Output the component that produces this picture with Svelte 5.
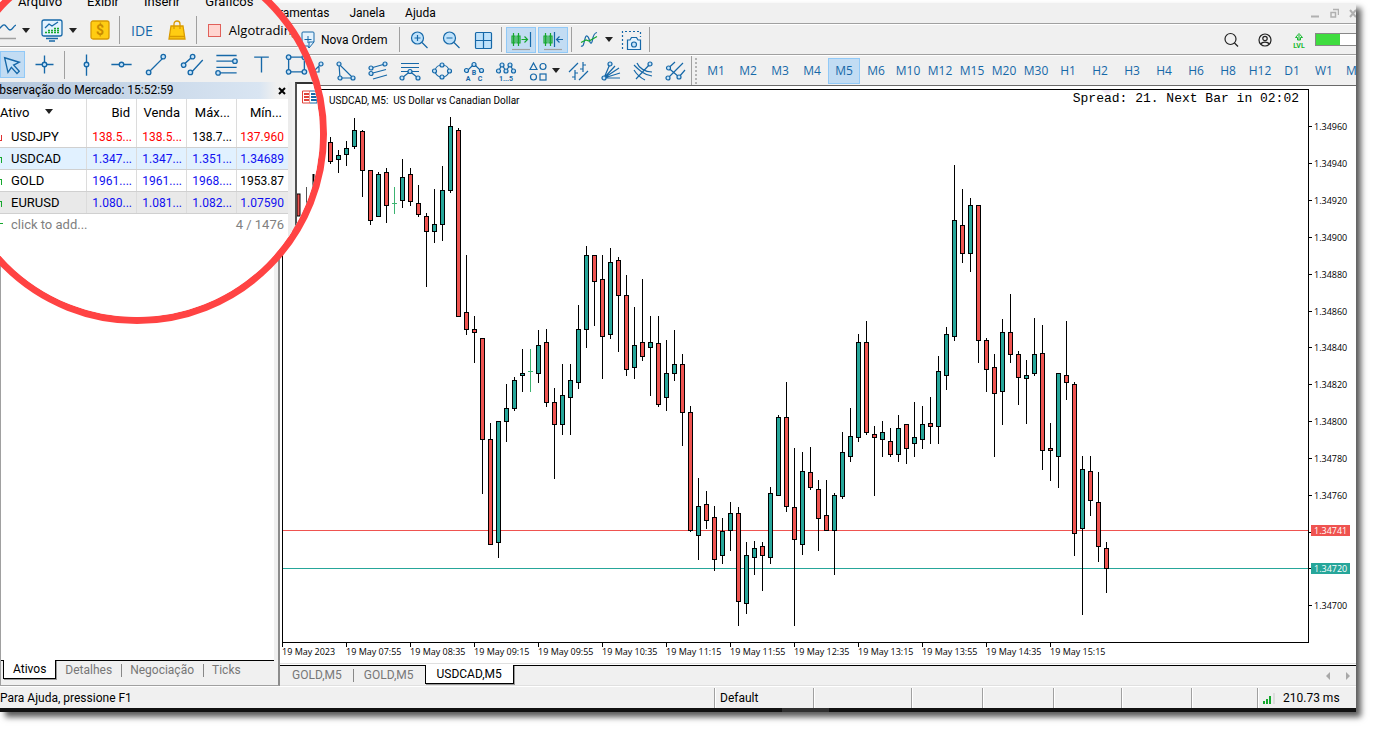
<script lang="ts">
  type Candle = [number, number, number, number, 'up' | 'down']
  type Dot = [number, number]

  interface Tool {
    name: string
    d?: string
    dots?: Dot[]
    label?: string
  }

  const menus = ['Ferramentas', 'Janela', 'Ajuda']
  const lensMenus = ['Arquivo', 'Exibir', 'Inserir', 'Gráficos']

  const timeframes = [
    'M1', 'M2', 'M3', 'M4', 'M5', 'M6', 'M10', 'M12', 'M15', 'M20', 'M30',
    'H1', 'H2', 'H3', 'H4', 'H6', 'H8', 'H12', 'D1', 'W1', 'MN',
  ]
  let timeframe = $state('M5')

  const tools: Tool[] = [
    { name: 'Angle', d: 'M4 20L19 5M17 8v5h-5', dots: [[19, 5]] },
    { name: 'Triangle', d: 'M5 5L6 19L19 19Z', dots: [[5, 5], [6, 19], [19, 19]] },
    {
      name: 'Channel',
      d: 'M5 9L19 5M5 14.500L20 10.500M7 20L21 16',
      dots: [[5, 9], [19, 5], [5, 14.5]],
    },
    {
      name: 'Expansion',
      d: 'M3 4.500H21M3 8.500H21M3 12.500H21M4 19L12 12.500L20 19',
      dots: [[4, 19], [12, 12.5], [20, 19]],
    },
    {
      name: 'Ellipse',
      d: 'M5 12C6 4 18 4 19 12C18 20 6 20 5 12Z',
      dots: [[4.5, 12], [12, 6], [19.5, 12], [12, 18]],
    },
    {
      name: 'Correction wave',
      d: 'M5 12L12 5L19 12',
      dots: [[4.5, 11.5], [12, 5.5], [19.5, 11.5]],
      label: 'ABC',
    },
    {
      name: 'Impulse wave',
      d: 'M4.500 12L8 6L12 12L16 6L19.500 12',
      dots: [[4.5, 12], [8, 6], [12, 12], [16, 6], [19.5, 12]],
      label: '1...5',
    },
  ]

  const lineTools: Tool[] = [
    {
      name: 'Cycle lines',
      d: 'M2 13L11 4M12 21L21 12M8 11V21M5 18H8M8 14H11M16 3V13M16 6H19M13 10H16',
    },
    {
      name: 'Gann fan',
      d: 'M5 19L11 5M5 19L16 7M5 19L20 9M5 19L21 14M5 19L21 19',
      dots: [[5, 19], [11, 5]],
    },
    {
      name: 'Fibonacci arcs',
      d: 'M5 20L19 5M3 11C6 16 10 19 14 21M3 6C8 11 13 16 21 17M6 4C8 9 14 13 21 13',
      dots: [[19, 5]],
    },
    {
      name: 'Pitchfork',
      d: 'M5.500 9L12 3M5 19L20 4M16 18L22 11M5.500 9L16 18',
      dots: [[5.5, 9], [5, 19], [16, 18]],
    },
  ]

  const lensTools: Tool[] = [
    { name: 'Vertical line', d: 'M12 3V22', dots: [[12, 12]] },
    { name: 'Horizontal line', d: 'M3 12H21', dots: [[12, 12]] },
    { name: 'Trendline', d: 'M4 20L19 5', dots: [[5, 19], [18, 5]] },
    {
      name: 'Equidistant channel',
      d: 'M4 13L14 4M11 20L22 8',
      dots: [[5, 12.5], [13, 5], [11, 19]],
    },
    {
      name: 'Fibonacci',
      d: 'M3 4H21M3 9H18M3 14.500H21M6 19.500H21',
      dots: [[19.5, 9], [4.5, 19.5]],
    },
    { name: 'Text', d: 'M5.500 5.500H18.500M12 5.500V19' },
    {
      name: 'Rectangle',
      d: 'M5 5.500H19V18.500H5Z',
      dots: [[5, 5.5], [19, 5.5], [19, 18.5], [5, 18.5]],
    },
  ]

  const quotes = [
    { symbol: 'USDJPY', dir: 'down', bid: '138.5...', ask: '138.5...', high: '138.7...', low: '137.960', tones: ['red', 'red', 'black', 'red'] },
    { symbol: 'USDCAD', dir: 'up', bid: '1.347...', ask: '1.347...', high: '1.351...', low: '1.34689', tones: ['blue', 'blue', 'blue', 'blue'] },
    { symbol: 'GOLD', dir: 'up', bid: '1961....', ask: '1961....', high: '1968....', low: '1953.87', tones: ['blue', 'blue', 'blue', 'black'] },
    { symbol: 'EURUSD', dir: 'up', bid: '1.080...', ask: '1.081...', high: '1.082...', low: '1.07590', tones: ['blue', 'blue', 'blue', 'blue'] },
  ]

  // wick top, body top, body bottom, wick bottom
  const candles: Candle[] = [
    [137, 142, 162, 164, 'down'],
    [150, 155, 160, 173, 'up'],
    [141, 148, 155, 166, 'up'],
    [118, 130, 147, 149, 'up'],
    [130, 131, 171, 197, 'down'],
    [170, 170, 221, 225, 'down'],
    [172, 174, 217, 217, 'up'],
    [168, 172, 206, 223, 'down'],
    [187, 203, 203, 214, 'up'],
    [159, 177, 201, 208, 'up'],
    [168, 174, 202, 206, 'down'],
    [185, 203, 215, 217, 'down'],
    [213, 216, 232, 287, 'down'],
    [189, 224, 232, 243, 'up'],
    [166, 190, 225, 241, 'up'],
    [117, 126, 191, 193, 'up'],
    [128, 130, 317, 317, 'down'],
    [255, 312, 330, 335, 'down'],
    [316, 329, 333, 363, 'down'],
    [338, 338, 440, 494, 'down'],
    [423, 439, 545, 545, 'down'],
    [421, 421, 543, 558, 'up'],
    [384, 408, 422, 442, 'up'],
    [377, 380, 409, 411, 'up'],
    [349, 373, 376, 392, 'up'],
    [349, 371, 371, 392, 'up'],
    [330, 345, 374, 383, 'up'],
    [329, 342, 403, 407, 'down'],
    [388, 402, 425, 479, 'down'],
    [364, 395, 425, 435, 'up'],
    [364, 380, 398, 435, 'up'],
    [305, 329, 383, 389, 'up'],
    [246, 255, 330, 348, 'up'],
    [255, 255, 282, 326, 'down'],
    [255, 279, 337, 379, 'down'],
    [248, 262, 335, 339, 'up'],
    [257, 260, 296, 352, 'down'],
    [275, 295, 370, 376, 'down'],
    [307, 345, 368, 379, 'up'],
    [279, 342, 357, 361, 'down'],
    [316, 342, 348, 396, 'up'],
    [316, 343, 405, 407, 'down'],
    [340, 373, 398, 411, 'up'],
    [330, 364, 374, 381, 'up'],
    [354, 364, 413, 446, 'down'],
    [406, 412, 531, 532, 'down'],
    [478, 506, 536, 560, 'up'],
    [491, 504, 521, 529, 'down'],
    [506, 517, 560, 571, 'down'],
    [518, 531, 556, 564, 'up'],
    [502, 513, 531, 551, 'up'],
    [507, 513, 602, 626, 'down'],
    [542, 555, 604, 614, 'up'],
    [541, 548, 558, 575, 'up'],
    [542, 546, 556, 591, 'down'],
    [487, 493, 558, 564, 'up'],
    [415, 417, 496, 496, 'up'],
    [382, 417, 507, 512, 'down'],
    [448, 507, 540, 626, 'down'],
    [452, 471, 545, 555, 'up'],
    [447, 472, 488, 490, 'down'],
    [480, 489, 519, 551, 'down'],
    [480, 515, 531, 531, 'down'],
    [493, 495, 531, 575, 'up'],
    [432, 452, 497, 499, 'up'],
    [408, 436, 457, 462, 'up'],
    [334, 342, 438, 442, 'up'],
    [321, 342, 433, 435, 'down'],
    [426, 434, 438, 496, 'down'],
    [421, 432, 440, 457, 'up'],
    [428, 441, 455, 457, 'down'],
    [415, 428, 455, 462, 'up'],
    [424, 424, 449, 464, 'down'],
    [402, 437, 444, 457, 'up'],
    [406, 424, 440, 449, 'up'],
    [397, 423, 427, 444, 'down'],
    [356, 371, 427, 444, 'up'],
    [327, 334, 376, 390, 'up'],
    [165, 220, 337, 341, 'up'],
    [189, 225, 254, 263, 'down'],
    [198, 205, 254, 272, 'up'],
    [205, 205, 341, 363, 'down'],
    [338, 340, 370, 392, 'down'],
    [354, 367, 394, 457, 'down'],
    [319, 332, 392, 425, 'up'],
    [294, 332, 355, 363, 'down'],
    [351, 354, 378, 405, 'down'],
    [360, 375, 379, 424, 'up'],
    [318, 354, 374, 376, 'up'],
    [325, 353, 451, 470, 'down'],
    [423, 448, 451, 481, 'down'],
    [373, 373, 457, 488, 'up'],
    [321, 375, 383, 400, 'down'],
    [382, 384, 534, 556, 'down'],
    [456, 469, 529, 615, 'up'],
    [456, 471, 501, 516, 'down'],
    [472, 502, 547, 562, 'down'],
    [542, 548, 569, 593, 'down'],
  ]

  // candle rows are stored in window space, the plot starts below the toolbars
  const PLOT_TOP = 90
  const FIRST_X = 47
  const STEP = 8

  const TOP_PRICE = 134960
  const TOP_PRICE_Y = 36

  // 240 points take 442 px
  function priceY(points: number): number {
    return Math.ceil(TOP_PRICE_Y + ((TOP_PRICE - points) * 442) / 240)
  }

  const prices = Array.from({ length: 14 }, (_, i) => TOP_PRICE - i * 20)
  const ask = 134741
  const bid = 134720

  const times = [
    '19 May 2023', '19 May 07:55', '19 May 08:35', '19 May 09:15',
    '19 May 09:55', '19 May 10:35', '19 May 11:15', '19 May 11:55',
    '19 May 12:35', '19 May 13:15', '19 May 13:55', '19 May 14:35',
    '19 May 15:15',
  ]

  const watchTabs = ['Ativos', 'Detalhes', 'Negociação', 'Ticks']
  const chartTabs = ['GOLD,M5', 'GOLD,M5', 'USDCAD,M5']
  let watchTab = $state(0)
  let chartTab = $state(2)
</script>

{#snippet toolIcon(tool: Tool)}
  <svg class="icon" viewBox="0 0 24 24" aria-hidden="true">
    {#if tool.d}<path d={tool.d} />{/if}
    {#each tool.dots ?? [] as [x, y]}
      <circle cx={x} cy={y} r="2" />
    {/each}
    {#if tool.label === 'ABC'}
      <text x="12" y="16">B</text>
      <text x="6" y="22">A</text>
      <text x="18" y="22">C</text>
    {:else if tool.label}
      <text x="12" y="22">{tool.label}</text>
    {/if}
  </svg>
{/snippet}

{#snippet caret()}
  <svg class="caret" viewBox="0 0 8 5" aria-hidden="true"><path d="M0 0H8L4 5Z" /></svg>
{/snippet}

<div class="window">
  <header class="menubar">
    <nav class="menus">
      {#each menus as item}
        <button type="button">{item}</button>
      {/each}
    </nav>
    <div class="window-buttons">
      <button type="button" aria-label="Minimize">
        <svg viewBox="0 0 10 10"><path d="M1 8.500H9" stroke-width="2" /></svg>
      </button>
      <button type="button" aria-label="Restore">
        <svg viewBox="0 0 10 10"><path d="M2 4.500H6.500V9H2ZM4 1.500H9.500V7" stroke-width="1.500" /></svg>
      </button>
      <button type="button" aria-label="Close">
        <svg viewBox="0 0 10 10"><path d="M2 2L8 9M8 2L2 9" stroke-width="2" /></svg>
      </button>
    </div>
  </header>

  <div class="toolbar">
    <button type="button" class="order">
      <svg viewBox="0 0 14 18" aria-hidden="true">
        <path class="page" d="M2 1H12Q13 1 13 2V11L8 17L7 15H2Q1 15 1 14V2Q1 1 2 1Z" />
        <path d="M7 5V12M3.500 8.500H10.500M13 11H8V17" />
      </svg>
      Nova Ordem
    </button>
    <i class="sep"></i>
    <button type="button" class="tool" aria-label="Zoom in">
      <svg class="icon" viewBox="0 0 24 24">
        <circle class="big" cx="10.500" cy="10" r="6" /><path d="M15 14.500L20.500 20M10.500 7V13M7.500 10H13.500" />
      </svg>
    </button>
    <button type="button" class="tool" aria-label="Zoom out">
      <svg class="icon" viewBox="0 0 24 24">
        <circle class="big" cx="10.500" cy="10" r="6" /><path d="M15 14.500L20.500 20M7.500 10H13.500" />
      </svg>
    </button>
    <button type="button" class="tool" aria-label="Tile windows">
      <svg class="icon" viewBox="0 0 24 24">
        <rect class="big" x="4.500" y="4.500" width="16" height="16" rx="1" /><path d="M12.500 4.500V20.500M4.500 12.500H20.500" />
      </svg>
    </button>
    <i class="sep"></i>
    <button type="button" class="toggle" aria-pressed="true" aria-label="Auto scroll">
      <svg class="icon" viewBox="0 0 24 24">
        <path class="green" d="M4.500 5V18M3 8H6V15H3ZM9.500 5V18M8 8H11V15H8ZM12.500 11.500H18.500M15.500 8.500L18.500 11.500L15.500 14.500" />
        <path d="M21.500 4V19" /><path class="gray" d="M3 21.500H21" />
      </svg>
    </button>
    <button type="button" class="toggle" aria-pressed="true" aria-label="Chart shift">
      <svg class="icon" viewBox="0 0 24 24">
        <path class="green" d="M4.500 5V18M3 8H6V15H3ZM9.500 5V18M8 8H11V15H8Z" />
        <path d="M13.500 4V19M16 11.500H22M18.500 8.500L15.500 11.500L18.500 14.500" /><path class="gray" d="M3 21.500H21" />
      </svg>
    </button>
    <i class="sep close"></i>
    <button type="button" class="tool indicators" aria-label="Indicators">
      <svg class="icon" viewBox="0 0 24 24">
        <path d="M4 18C8 20 7 7 10 8C13 9 12 16 14.500 15C16 14 15 5 20 4.500" />
        <path class="green" d="M4 14.500L9 12L12 13L20 8.500" />
      </svg>
      {@render caret()}
    </button>
    <button type="button" class="tool" aria-label="Screenshot">
      <svg class="icon" viewBox="0 0 24 24">
        <path stroke-dasharray="2 2" d="M3.500 21V3.500H21.500V9" />
        <path class="page" d="M8.500 12H11L12.500 9.500H17.500L19 12H21.500V21.500H8.500Z" />
        <circle cx="15" cy="16.500" r="2.500" />
      </svg>
    </button>
    <i class="sep"></i>
    <div class="account">
      <button type="button" aria-label="Search">
        <svg class="dark" viewBox="0 0 16 16"><circle cx="7.500" cy="7" r="5.500" /><path d="M11.500 11L15 14.500" /></svg>
      </button>
      <button type="button" aria-label="Profile">
        <svg class="dark" viewBox="0 0 16 16">
          <circle cx="8" cy="8" r="6" /><circle cx="8" cy="6.500" r="2.200" /><path d="M4 12C5 9.500 11 9.500 12 12" />
        </svg>
      </button>
      <button type="button" class="level" aria-label="Level">
        <svg viewBox="0 0 16 18">
          <path d="M6.500 9V6.500H4.500L8 2.500L11.500 6.500H9.500V9ZM8 4V9" /><text x="8" y="17">LVL</text>
        </svg>
      </button>
      <div class="meter"><span style="width: 60%"></span></div>
    </div>
  </div>

  <div class="toolbar drawing">
    {#each tools as tool}
      <button type="button" class="tool" aria-label={tool.name}>{@render toolIcon(tool)}</button>
    {/each}
    <button type="button" class="tool shapes" aria-label="Shapes">
      <svg class="icon" viewBox="0 0 24 24">
        <path d="M7.500 4L11 10.500H4Z" /><circle class="shape" cx="17" cy="7.500" r="3" />
        <circle class="shape" cx="7.500" cy="18" r="3" /><rect class="shape" x="14" y="15" width="6" height="6" />
      </svg>
      {@render caret()}
    </button>
    {#each lineTools as tool}
      <button type="button" class="tool" aria-label={tool.name}>{@render toolIcon(tool)}</button>
    {/each}
    <i class="edge"></i>
    <i class="grip"></i>
    {#each timeframes as tf}
      <button
        type="button"
        class="timeframe"
        class:selected={tf === timeframe}
        onclick={() => (timeframe = tf)}>{tf}</button>
    {/each}
  </div>

  <div class="workspace">
    <aside class="watch">
      <div class="watch-body"></div>
      <div class="watch-tabs">
        {#each watchTabs as tab, i}
          <button
            type="button"
            class:current={i === watchTab}
            onclick={() => (watchTab = i)}>{tab}</button>
        {/each}
      </div>
    </aside>

    <main class="charts">
      <div class="chart">
        <svg class="plot" role="img" aria-label="USDCAD M5 candles">
          <polygon points="818,0 830,0 824,5" fill="#f3eaf5" />
          <rect class="down" x="0" y={priceY(ask)} width="100%" height="1" />
          <rect class="up" x="0" y={priceY(bid)} width="100%" height="1" />
          {#each candles as [high, top, bottom, low, dir], i}
            {@const x = FIRST_X + i * STEP}
            {#if top === bottom}
              <rect class="doji" {x} y={high - PLOT_TOP} width="1" height={low - high} />
              <rect class="doji" x={x - 2} y={top - PLOT_TOP} width="5" height="1" />
            {:else}
              <rect {x} y={high - PLOT_TOP} width="1" height={low - high} />
              <rect x={x - 2} y={top - PLOT_TOP} width="5" height={bottom - top} />
              <rect
                class={dir}
                x={x - 1}
                y={top - PLOT_TOP + 1}
                width="3"
                height={Math.max(bottom - top - 2, 1)}
              />
            {/if}
          {/each}
          <text class="title" x="46" y="14" xml:space="preserve">USDCAD, M5:  US Dollar vs Canadian Dollar</text>
        </svg>
        <p class="spread">Spread: 21. Next Bar in 02:02</p>
        <svg class="prices">
          {#each prices as price}
            <rect x="0" y={priceY(price) + 1} width="3" height="1" />
            {#if price !== bid && price !== 134740}
              <text x="5" y={priceY(price) + 5}>{(price / 100000).toFixed(5)}</text>
            {/if}
          {/each}
          <rect class="down" x="2" y={priceY(ask) - 4} width="39" height="11" />
          <text class="tag" x="5" y={priceY(ask) + 5}>{(ask / 100000).toFixed(5)}</text>
          <rect class="up" x="2" y={priceY(bid) - 4} width="39" height="11" />
          <text class="tag" x="5" y={priceY(bid) + 5}>{(bid / 100000).toFixed(5)}</text>
        </svg>
        <svg class="times">
          {#each times as time, i}
            <rect x={i * 64} y="0" width="1" height="4" />
            <text x={i * 64} y="12">{time}</text>
          {/each}
        </svg>
      </div>
      <div class="chart-tabs">
        {#each chartTabs as tab, i}
          <button
            type="button"
            class:current={i === chartTab}
            onclick={() => (chartTab = i)}>{tab}</button>
        {/each}
        <div class="scroll">
          <button type="button" aria-label="Scroll left"><svg viewBox="0 0 4 8"><path d="M4 0V8L0 4Z" /></svg></button>
          <button type="button" aria-label="Scroll right"><svg viewBox="0 0 4 8"><path d="M0 0V8L4 4Z" /></svg></button>
        </div>
      </div>
    </main>
  </div>

  <footer class="status">
    <span class="help">Para Ajuda, pressione F1</span>
    <span class="profile">Default</span>
    <span></span><span></span><span></span><span></span><span></span><span></span>
    <span class="ping">
      <svg viewBox="0 0 13 11" aria-hidden="true">
        <path class="on" d="M1 8V11M4 6V11M7 3V11" /><path class="off" d="M11 0V11" />
      </svg>
      210.73 ms
    </span>
  </footer>
  <div class="taskbar"><span></span></div>
</div>

<section class="lens" aria-label="Market watch">
  <div class="lens-content">
    <nav class="lens-menus">
      {#each lensMenus as item}
        <button type="button">{item}</button>
      {/each}
    </nav>
    <div class="lens-bar">
      <button type="button" class="split" aria-label="Line chart">
        <svg class="art" viewBox="0 0 16 24">
          <path d="M-2 12L2 8C6 4 7 12 10 12C13 12 13 8 16 7" /><path class="gray" d="M0 20.500H16" />
        </svg>
        {@render caret()}
      </button>
      <button type="button" class="split" aria-label="Trading terminal">
        <svg class="art wide" viewBox="0 0 22 24">
          <path class="page" d="M3 2H19Q21 2 21 4V16Q21 18 19 18H3Q1 18 1 16V4Q1 2 3 2Z" />
          <path d="M4 10L8 6L11 8L17 4M5 20.500H17M8 23H14" />
          <path class="green" stroke-dasharray="2 1" d="M4 14.500H18M7 12.500H18M13 10.500H18" />
        </svg>
        {@render caret()}
      </button>
      <button type="button" aria-label="Deposit">
        <svg class="art gold" viewBox="0 0 20 20">
          <rect x="1" y="1" width="18" height="18" rx="2" /><text x="10" y="15">$</text>
        </svg>
      </button>
      <i class="sep"></i>
      <button type="button" class="ide">IDE</button>
      <button type="button" aria-label="Market">
        <svg class="art gold" viewBox="0 0 18 20">
          <path d="M3 6H15L17 19H1Z" /><path class="open" d="M6 9V4C6 0 12 0 12 4V9M2 16.500H16" />
        </svg>
      </button>
      <i class="sep"></i>
      <button type="button" class="algo"><i class="stop"></i>Algotrading</button>
    </div>
    <div class="lens-bar lens-tools">
      <button type="button" class="pointer" aria-label="Cursor">
        <svg class="icon" viewBox="0 0 24 24"><path class="fill" d="M5 6L18 10L13 12.500L18 18L16 20L11 14.500L8 19Z" /></svg>
      </button>
      <button type="button" aria-label="Crosshair">
        {@render toolIcon({ name: 'Crosshair', d: 'M12 4V20M4 12H20', dots: [[12, 12]] })}
      </button>
      <i class="sep"></i>
      {#each lensTools as tool}
        <button type="button" aria-label={tool.name}>{@render toolIcon(tool)}</button>
      {/each}
    </div>
    <div class="lens-body">
      <div class="quotes">
        <div class="quotes-title">
          <h2>Observação do Mercado: 15:52:59</h2>
          <button type="button" aria-label="Close">
            <svg viewBox="0 0 8 8"><path d="M1 1L7 7M7 1L1 7" /></svg>
          </button>
        </div>
        <table>
          <thead>
            <tr>
              <th class="name">Ativo {@render caret()}</th>
              <th>Bid</th>
              <th>Venda</th>
              <th>Máx...</th>
              <th class="low">Mín...</th>
            </tr>
          </thead>
          <tbody>
            {#each quotes as q}
              <tr class={q.symbol.toLowerCase()}>
                <td class="name"><i class="arrow {q.dir}"></i>{q.symbol}</td>
                <td class={q.tones[0]}>{q.bid}</td>
                <td class={q.tones[1]}>{q.ask}</td>
                <td class={q.tones[2]}>{q.high}</td>
                <td class={q.tones[3]}>{q.low}</td>
              </tr>
            {/each}
            <tr class="add">
              <td class="name" colspan="3"><i class="arrow plus"></i>click to add...</td>
              <td colspan="2">4 / 1476</td>
            </tr>
          </tbody>
        </table>
      </div>
      <div class="lens-chart">
        <svg aria-hidden="true">
          <path d="M5.500 7H13V19H5.500Z" fill="#fff" stroke="#e0433a" />
          <path d="M13 7H20V19H13" fill="#fff" stroke="#1668a8" />
          <path d="M7 10H12M7 13H12M7 16H12" stroke="#e0433a" stroke-width="2" />
          <path d="M14 10H20M14 13H20M14 16H20" stroke="#1668a8" stroke-width="2" />
          <rect x="0" y="110" width="3" height="22" fill="#ef5350" stroke="#000" />
          <path d="M9.500 103V132" stroke="#555" />
          <path d="M16.500 90V118" stroke="#000" stroke-width="2" />
        </svg>
      </div>
    </div>
  </div>
</section>

<style>
  :global(body) {
    min-height: 100vh;
    margin: 0;
    padding-top: 3px;
    box-sizing: border-box;
    background: #fff;
    font-family: Roboto, 'Noto Sans', sans-serif;
    font-size: 12px;
    color: #000;
  }

  button {
    margin: 0;
    padding: 0;
    border: 0;
    background: none;
    font: inherit;
    color: inherit;
    white-space: nowrap;
  }

  svg {
    display: block;
    fill: none;
    flex-shrink: 0;
  }

  .window {
    margin-right: 20px;
    background: #f0f0f0;
    box-shadow: 5px 5px 6px rgba(0, 0, 0, 0.65);
  }

  .menubar {
    display: flex;
    justify-content: space-between;
    height: 20px;
    padding-left: 262px;
    overflow: hidden;
    border-bottom: 1px solid #a0a0a0;
  }

  .menus {
    display: flex;
    gap: 20px;
    line-height: 20px;
  }

  .window-buttons {
    display: flex;
    gap: 9px;
    align-items: center;
    margin-right: -2px;
  }

  .window-buttons svg {
    width: 10px;
    height: 10px;
    stroke: #b0b0b0;
  }

  .toolbar {
    display: flex;
    align-items: center;
    height: 29px;
    padding-left: 301px;
    overflow: hidden;
    border-top: 1px solid #fff;
    border-bottom: 1px solid #a0a0a0;
  }

  .drawing {
    padding-left: 298px;
    border-bottom-color: #696969;
  }

  .icon {
    width: 24px;
    height: 24px;
    stroke: #1668a8;
    stroke-width: 1.2;
  }

  .icon circle,
  .fill {
    fill: #c5e2f8;
  }

  .icon .big {
    fill: #bfe2fb;
  }

  .icon .shape {
    fill: none;
  }

  .icon text {
    fill: #1668a8;
    stroke: none;
    font-size: 7px;
    font-weight: 700;
    text-anchor: middle;
  }

  .icon .green,
  .art .green {
    stroke: #16a82e;
  }

  .icon .gray,
  .art .gray {
    stroke: #a0a0a0;
  }

  .page {
    fill: #e3f2fd;
  }

  .caret {
    width: 8px;
    height: 5px;
    fill: #222;
  }

  .tool {
    display: flex;
    align-items: center;
    justify-content: center;
    flex: none;
    width: 32px;
  }

  .tool.indicators {
    width: 40px;
    gap: 4px;
  }

  .tool.shapes {
    width: 41px;
    gap: 2px;
  }

  .order {
    display: flex;
    align-items: center;
    gap: 6px;
  }

  .order svg {
    width: 14px;
    height: 18px;
    stroke: #1668a8;
  }

  .sep {
    flex: none;
    width: 1px;
    height: 25px;
    margin: 0 3px 0 12px;
    background: #a0a0a0;
  }

  .tool + .sep {
    margin: 0 4px 0 2px;
  }

  .toggle {
    display: flex;
    align-items: center;
    justify-content: center;
    flex: none;
    width: 30px;
    height: 26px;
    margin-right: 2px;
    background: #c2dcf3;
    border: 1px solid #91c9f7;
    box-sizing: border-box;
  }

  .sep.close {
    margin: 0 3px 0 1px;
  }

  .account {
    display: flex;
    align-items: center;
    gap: 18px;
    margin-left: auto;
  }

  .account svg {
    width: 16px;
    height: 16px;
  }

  .dark {
    stroke: #222;
    stroke-width: 1.2;
  }

  .level svg {
    height: 18px;
    stroke: #16b82e;
  }

  .level text {
    fill: #16b82e;
    stroke: none;
    font-size: 7px;
    font-weight: 700;
    text-anchor: middle;
  }

  .meter {
    width: 40px;
    height: 11px;
    margin-left: -10px;
    background: #fff;
    border: 1px solid #888;
    border-right: 0;
  }

  .meter span {
    display: block;
    height: 100%;
    background: #3fdc3f;
  }

  .edge {
    flex: none;
    width: 1px;
    height: 29px;
    background: #a0a0a0;
  }

  .grip {
    flex: none;
    width: 2px;
    height: 26px;
    margin: 0 3px;
    background: repeating-linear-gradient(#b4b4b4 0 2px, transparent 2px 4px);
  }

  .timeframe {
    flex: none;
    width: 32px;
    height: 26px;
    color: #1668a8;
    font-family: 'Open Sans', 'Noto Sans', sans-serif;
    border: 1px solid transparent;
  }

  .timeframe.selected {
    background: #c2dcf3;
    border-color: #91c9f7;
  }

  .workspace {
    display: flex;
  }

  .watch {
    display: flex;
    flex-direction: column;
    flex: none;
    width: 273px;
    padding-right: 4px;
    border-left: 1px solid #a0a0a0;
    border-right: 2px solid #8c8c8c;
    border-bottom: 1px solid #a0a0a0;
  }

  .watch-body {
    flex: 1;
    background: #fff;
  }

  .watch-tabs,
  .chart-tabs {
    display: flex;
    color: #777;
    border-top: 1px solid #000;
  }

  .watch-tabs {
    height: 24px;
    padding-left: 2px;
  }

  .watch-tabs button,
  .chart-tabs > button {
    height: 19px;
    padding: 0 9px;
    line-height: 19px;
    position: relative;
  }

  .chart-tabs > button {
    padding: 0 11px;
  }

  .watch-tabs button:not(.current) + button::before,
  .chart-tabs button:not(.current) + button:not(.current)::before {
    content: '';
    position: absolute;
    left: 0;
    top: 3px;
    height: 13px;
    border-left: 1px solid #888;
  }

  button.current {
    margin-top: -1px;
    color: #000;
    background: #fff;
    border: 1px solid #000;
    border-top: 0;
    box-shadow: 1px 1px #999;
  }

  .charts {
    flex: 1;
    min-width: 0;
    background: #fff;
  }

  .chart {
    display: grid;
    grid-template-columns: 1fr 47px;
    padding: 3px 0 0 2px;
    border-bottom: 1px solid #e0e0e0;
    margin-bottom: 1px;
    position: relative;
  }

  .plot {
    width: 100%;
    height: 554px;
    border: 1px solid #000;
    box-sizing: border-box;
    fill: #000;
  }

  .prices text,
  .times text {
    font-family: 'Open Sans', 'Noto Sans', sans-serif;
    font-size: 9px;
  }

  .plot .title {
    font-size: 10px;
  }

  .plot .down,
  .prices .down {
    fill: #ef5350;
  }

  .plot .up,
  .prices .up {
    fill: #26a69a;
  }

  .plot .doji {
    fill: #3cb371;
  }

  .spread {
    position: absolute;
    top: 5px;
    right: 57px;
    margin: 0;
    font: 13px/16px 'Liberation Mono', monospace;
  }

  .prices {
    width: 100%;
    height: 554px;
    fill: #000;
  }

  .prices .tag {
    fill: #fff;
  }

  .times {
    grid-column: 1 / -1;
    width: 100%;
    height: 20px;
    fill: #000;
  }

  .chart-tabs {
    height: 19px;
    padding-left: 1px;
    background: #f0f0f0;
    border-bottom: 1px solid #e0e0e0;
  }

  .scroll {
    display: flex;
    gap: 16px;
    align-items: center;
    margin: 0 6px 0 auto;
  }

  .scroll svg {
    width: 4px;
    height: 8px;
    fill: #a8a8a8;
  }

  .status {
    display: grid;
    grid-template-columns: 714fr 99fr 98fr 71fr 71fr 68fr 70fr 66fr 99fr;
    height: 20px;
    padding: 1px 0 0;
    border-top: 1px solid #fff;
    line-height: 20px;
  }

  .status span + span {
    border-left: 1px solid #a0a0a0;
    box-shadow: inset 1px 0 #fff;
  }

  .profile {
    padding-left: 5px;
  }

  .ping {
    display: flex;
    align-items: center;
    gap: 7px;
    padding-left: 5px;
  }

  .ping svg {
    width: 13px;
    height: 11px;
    stroke-width: 2;
  }

  .ping .on {
    stroke: #16a82e;
  }

  .ping .off {
    stroke: #ddd;
  }

  .taskbar {
    height: 4px;
    background: #111;
  }

  .taskbar span {
    display: block;
    width: 47px;
    height: 4px;
    margin-left: 782px;
    background: #303030;
  }

  /* magnified corner, lies over the window */
  .lens {
    position: absolute;
    left: -53px;
    top: -56px;
    width: 366px;
    height: 366px;
    overflow: hidden;
    border: 7px solid #ff4343;
    border-radius: 50%;
    background: #f0f0f0;
  }

  .lens-content {
    display: flex;
    flex-direction: column;
    height: 326px;
    margin: 40px 0 0 46px;
  }

  .lens-menus {
    display: flex;
    flex: none;
    gap: 25px;
    height: 23px;
    padding-left: 18px;
    font-size: 13px;
    line-height: 22px;
  }

  .lens-menus button {
    height: 22px;
  }

  .lens-bar {
    display: flex;
    flex: none;
    align-items: center;
    height: 32px;
    font-size: 13px;
    border-bottom: 1px solid #a0a0a0;
  }

  .lens-bar button {
    display: flex;
    align-items: center;
    flex: none;
  }

  .lens-bar .split {
    gap: 6px;
    margin-right: 11px;
  }

  .lens-bar .sep {
    height: 28px;
    margin: 0 11px 0 9px;
  }

  .art {
    width: 16px;
    height: 24px;
    stroke: #1668a8;
    stroke-width: 1.3;
  }

  .art.wide {
    width: 22px;
  }

  .gold {
    width: 20px;
    height: 20px;
    margin-left: 2px;
    fill: #ffcc12;
    stroke: #d99a00;
  }

  .gold .open {
    fill: none;
  }

  .gold text {
    fill: #c98a00;
    stroke: none;
    font-size: 14px;
    font-weight: 700;
    text-anchor: middle;
  }

  .ide,
  .algo {
    font-family: 'Open Sans', 'Noto Sans', sans-serif;
  }

  .ide {
    margin-right: 12px;
    color: #1668a8;
    font-size: 14px;
  }

  .algo {
    gap: 8px;
  }

  .stop {
    width: 11px;
    height: 11px;
    background: #ffd5d0;
    border: 1px solid #e0605a;
  }

  .lens-bar.lens-tools {
    height: 33px;
    border-top: 1px solid #fff;
    border-bottom-color: #f0f0f0;
  }

  .lens-tools button {
    justify-content: center;
    width: 35px;
    height: 27px;
  }

  .lens-tools .icon {
    width: 27px;
    height: 27px;
  }

  .lens-tools .pointer {
    width: 25px;
    margin-right: 2px;
    background: #c2dcf3;
    border: 1px solid #91c9f7;
    box-sizing: border-box;
  }

  .lens-tools .sep {
    margin: 0 4px 0 2px;
  }

  .lens-body {
    display: flex;
    flex: 1;
  }

  .quotes {
    flex: none;
    width: 288px;
    background: #fff;
    border-right: 4px solid #ececec;
  }

  .quotes-title {
    display: flex;
    align-items: center;
    justify-content: space-between;
    height: 17px;
    padding-right: 2px;
    background: linear-gradient(90deg, #b5c8de, #d9e5f2 90%, #f0f0f0 96%);
  }

  .quotes-title h2 {
    margin: 0 0 0 -9px;
    font-size: 12px;
    font-weight: 400;
    line-height: 17px;
  }

  .quotes-title svg {
    width: 8px;
    height: 8px;
    stroke: #000;
    stroke-width: 2;
  }

  table {
    width: 288px;
    table-layout: fixed;
    border-collapse: collapse;
    font-size: 12px;
  }

  th,
  td {
    height: 21px;
    padding: 0 4px 0 0;
    text-align: right;
    font-weight: 400;
    white-space: nowrap;
    border-left: 1px solid #dcdcdc;
    border-bottom: 1px solid #d0d0d0;
  }

  th {
    width: 43px;
    height: 27px;
    padding-right: 6px;
    font-size: 13px;
    border-bottom: 0;
  }

  th.low {
    width: auto;
  }

  .name,
  .add td {
    font-size: 13px;
  }

  .name {
    padding: 0 0 0 11px;
    text-align: left;
    border-left: 0;
  }

  th.name {
    width: 86px;
    padding: 0;
  }

  th.name .caret {
    display: inline-block;
    margin: 0 0 3px 12px;
  }

  .arrow {
    display: inline-block;
    width: 2px;
    height: 6px;
    margin: 0 9px 0 -11px;
    border-top: 1px solid #16a82e;
    border-right: 1px solid #16a82e;
    box-sizing: border-box;
  }

  .arrow.down {
    border-top: 0;
    border-bottom: 1px solid #e03030;
    border-right-color: #e03030;
  }

  .arrow.plus {
    width: 3px;
    margin-right: 8px;
    border-right: 0;
  }

  .usdcad {
    background: #e1f1ff;
  }

  .eurusd {
    background: #e9e9e9;
  }

  .red {
    color: #f00;
  }

  .blue {
    color: #1010f0;
  }

  .add td {
    color: #808080;
    border: 0;
  }

  .lens-chart {
    flex: 1;
    background: #fff;
    border-left: 2px solid #505050;
    border-top: 2px solid #333;
    margin-left: 3px;
  }

  .lens-chart svg {
    width: 30px;
    height: 200px;
  }
</style>
